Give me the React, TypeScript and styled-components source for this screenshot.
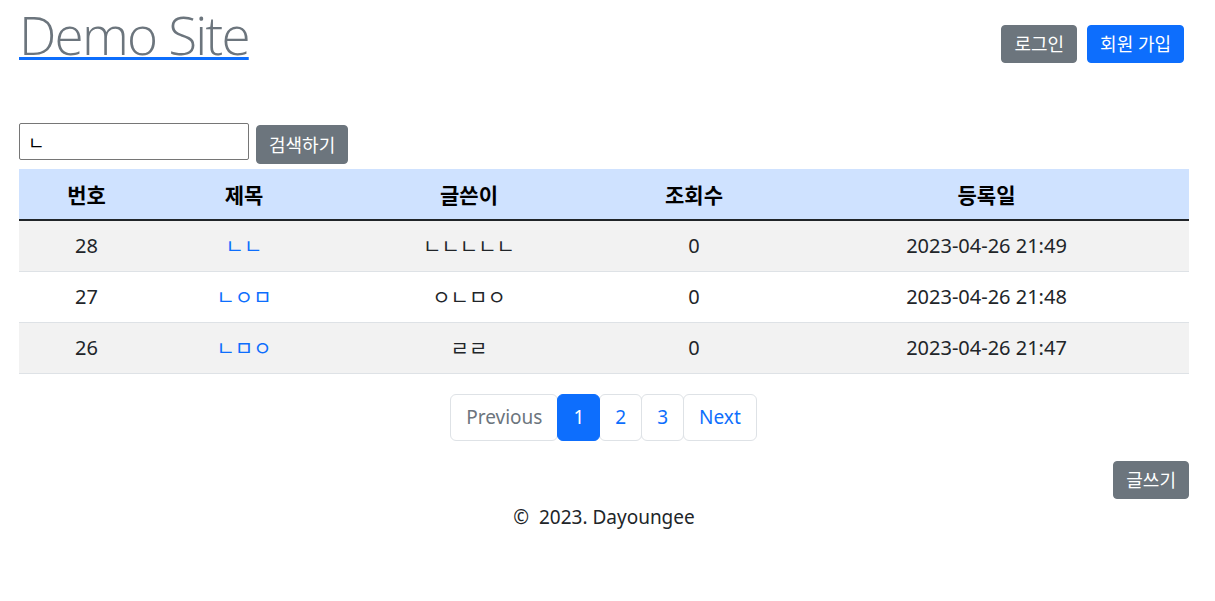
import React from "react";
import styled, { createGlobalStyle } from "styled-components";

const Global = createGlobalStyle`
  html, body { margin: 0; padding: 0; background: #fff; }
  body {
    font-family: "Noto Sans", "Noto Sans CJK KR", sans-serif;
    color: #212529;
    font-size: 18px;
  }
  * { box-sizing: border-box; }
`;

const Page = styled.div`
  padding: 0 26px 0 19px;
`;

const Header = styled.header`
  display: flex;
  justify-content: space-between;
  align-items: flex-start;
`;

const Brand = styled.a`
  display: inline-block;
  margin-top: 3px;
  font-family: "Open Sans", "Noto Sans", sans-serif;
  font-weight: 300;
  font-size: 53px;
  line-height: 64px;
  letter-spacing: -1.8px;
  color: #6c757d;
  text-decoration: underline;
  text-decoration-color: #0d6efd;
  text-decoration-thickness: 3px;
  text-underline-offset: 2px;
  cursor: pointer;
`;

const AuthGroup = styled.div`
  display: flex;
  gap: 10px;
  margin-top: 25px;
  margin-right: 5px;
`;

const Button = styled.button<{ $variant?: "primary" | "secondary" }>`
  font-family: inherit;
  font-size: 18px;
  line-height: 24px;
  padding: 6px 12px;
  height: 38px;
  border-radius: 4px;
  border: 1px solid ${(p) => (p.$variant === "primary" ? "#0d6efd" : "#6c757d")};
  background: ${(p) => (p.$variant === "primary" ? "#0d6efd" : "#6c757d")};
  color: #fff;
  cursor: pointer;
  white-space: nowrap;
`;

const SearchForm = styled.form`
  display: flex;
  align-items: flex-start;
  gap: 7px;
  margin-top: 56px;
`;

const SearchInput = styled.input`
  width: 230px;
  height: 37px;
  border: 1px solid #767676;
  border-radius: 2px;
  padding: 0 8px;
  font-family: inherit;
  font-size: 18px;
  color: #000;
`;

const SearchButton = styled(Button)`
  margin-top: 2px;
  height: 39px;
`;

const Table = styled.table`
  width: 100%;
  margin-top: 5px;
  border-collapse: collapse;
  text-align: center;
`;

const HeadRow = styled.tr`
  background: #cfe2ff;
  border-bottom: 2px solid #212529;
`;

const Th = styled.th<{ $w: number }>`
  width: ${(p) => p.$w}px;
  height: 51px;
  font-size: 21px;
  font-weight: 700;
  color: #000;
  padding: 0;
`;

const Row = styled.tr<{ $striped: boolean }>`
  background: ${(p) => (p.$striped ? "#f2f2f2" : "#fff")};
  border-bottom: 1px solid #dee2e6;
`;

const Td = styled.td`
  height: 51px;
  padding: 0;
  font-size: 20px;
`;

const TitleLink = styled.a`
  color: #0d6efd;
  text-decoration: none;
  cursor: pointer;
`;

const Pager = styled.nav`
  display: flex;
  justify-content: center;
  margin-top: 20px;
`;

const PageItem = styled.a<{ $active?: boolean; $disabled?: boolean }>`
  display: flex;
  align-items: center;
  justify-content: center;
  height: 47px;
  padding: 0 15px;
  margin-left: -1px;
  font-size: 19px;
  border: 1px solid ${(p) => (p.$active ? "#0d6efd" : "#dee2e6")};
  border-radius: 6px;
  background: ${(p) => (p.$active ? "#0d6efd" : "#fff")};
  color: ${(p) => (p.$active ? "#fff" : p.$disabled ? "#6c757d" : "#0d6efd")};
  position: relative;
  z-index: ${(p) => (p.$active ? 1 : 0)};
  cursor: pointer;
`;

const WriteRow = styled.div`
  display: flex;
  justify-content: flex-end;
  margin-top: 20px;
`;

const Footer = styled.footer`
  text-align: center;
  font-size: 19px;
  margin-top: 5px;
`;

const widths = [135, 180, 270, 180, 405];
const headers = ["번호", "제목", "글쓴이", "조회수", "등록일"];

const rows = [
  { no: 28, title: "ㄴㄴ", author: "ㄴㄴㄴㄴㄴ", views: 0, date: "2023-04-26 21:49" },
  { no: 27, title: "ㄴㅇㅁ", author: "ㅇㄴㅁㅇ", views: 0, date: "2023-04-26 21:48" },
  { no: 26, title: "ㄴㅁㅇ", author: "ㄹㄹ", views: 0, date: "2023-04-26 21:47" },
];

export default function App() {
  return (
    <Page>
      <Global />
      <Header>
        <Brand>Demo Site</Brand>
        <AuthGroup>
          <Button $variant="secondary">로그인</Button>
          <Button $variant="primary">회원 가입</Button>
        </AuthGroup>
      </Header>
      <SearchForm onSubmit={(e) => e.preventDefault()}>
        <SearchInput defaultValue="ㄴ" />
        <SearchButton $variant="secondary" type="submit">검색하기</SearchButton>
      </SearchForm>
      <Table>
        <thead>
          <HeadRow>
            {headers.map((h, i) => (
              <Th key={h} $w={widths[i]}>{h}</Th>
            ))}
          </HeadRow>
        </thead>
        <tbody>
          {rows.map((r, i) => (
            <Row key={r.no} $striped={i % 2 === 0}>
              <Td>{r.no}</Td>
              <Td><TitleLink>{r.title}</TitleLink></Td>
              <Td>{r.author}</Td>
              <Td>{r.views}</Td>
              <Td>{r.date}</Td>
            </Row>
          ))}
        </tbody>
      </Table>
      <Pager>
        <PageItem $disabled>Previous</PageItem>
        <PageItem $active>1</PageItem>
        <PageItem>2</PageItem>
        <PageItem>3</PageItem>
        <PageItem>Next</PageItem>
      </Pager>
      <WriteRow>
        <Button $variant="secondary">글쓰기</Button>
      </WriteRow>
      <Footer>©&nbsp; 2023. Dayoungee</Footer>
    </Page>
  );
}
